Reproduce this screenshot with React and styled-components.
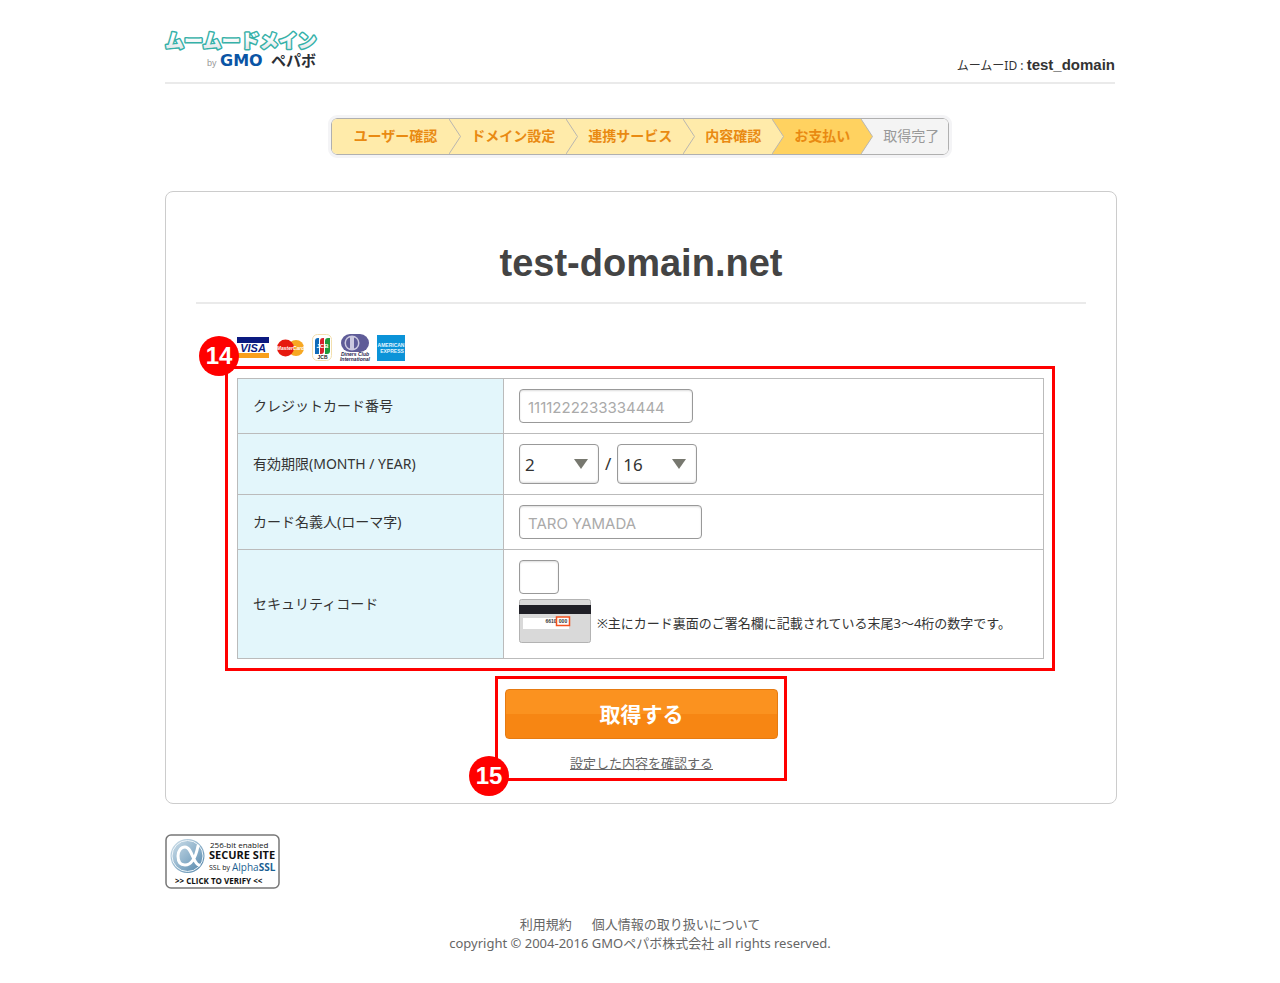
import React from 'react'
import styled, { createGlobalStyle } from 'styled-components'

const steps = [
  { label: 'ユーザー確認', state: 'done' },
  { label: 'ドメイン設定', state: 'done' },
  { label: '連携サービス', state: 'done' },
  { label: '内容確認', state: 'done' },
  { label: 'お支払い', state: 'current' },
  { label: '取得完了', state: 'next' },
]

const stepColors = {
  done: '#ffebaa',
  current: '#ffd260',
  next: '#f4f4f4',
}

function Logo() {
  return (
    <LogoSvg width="154" height="42" viewBox="0 0 154 42" role="img" aria-label="ムームードメイン by GMOペパボ">
      <defs>
        <linearGradient id="bubble" x1="0" y1="0" x2="0" y2="1">
          <stop offset="0.4" stopColor="#fff" />
          <stop offset="1" stopColor="#dcdfe2" />
        </linearGradient>
      </defs>
      <LogoKana x="0" y="20">ムームードメイン</LogoKana>
      <LogoBy x="42" y="38">by</LogoBy>
      <LogoGmo x="55" y="38">GMO</LogoGmo>
      <LogoPepabo x="106" y="38">ペパボ</LogoPepabo>
    </LogoSvg>
  )
}

function StepArrow({ from, to }) {
  return (
    <ArrowBox $state={to}>
      <svg width="12" height="35" viewBox="0 0 12 35" aria-hidden="true">
        <path d="M0 0L11.500 17.500L0 35Z" fill={stepColors[from]} />
        <path d="M0 0L11.500 17.500L0 35" fill="none" stroke="#b9b6b0" />
      </svg>
    </ArrowBox>
  )
}

function CardBrands() {
  return (
    <svg width="170" height="30" viewBox="0 0 170 30" role="img" aria-label="VISA MasterCard JCB Diners Club American Express">
      <rect x="0" y="4" width="32" height="21" fill="#fff" />
      <rect x="0" y="4" width="32" height="6" fill="#0b1a80" />
      <rect x="0" y="20" width="32" height="5" fill="#f9a01b" />
      <CardText x="16" y="19" $size={11} $color="#0b1a80" $italic>VISA</CardText>

      <circle cx="59" cy="15" r="8" fill="#f7a823" />
      <circle cx="48.500" cy="15" r="8.500" fill="#e6190f" />
      <CardText x="53.500" y="17" $size={5} $color="#fff" $italic>MasterCard</CardText>

      <rect x="75.500" y="1.500" width="19" height="26" rx="5" fill="#fff" stroke="#f3dfae" />
      <path d="M78 8q0-3 3-3h1v16h-4z" fill="#0f6bb8" />
      <path d="M83 8q0-3 3-3h1v13q0 3-3 3h-1z" fill="#d9202d" />
      <path d="M88 8q0-3 3-3h2v13q0 3-3 3h-2z" fill="#1f9a3c" />
      <CardText x="85.500" y="15" $size={6} $color="#fff">JCB</CardText>
      <CardText x="85.500" y="26" $size={5} $color="#222">JCB</CardText>

      <rect x="104" y="1" width="28" height="18" rx="9" fill="#5f5c98" />
      <circle cx="115" cy="10" r="7.500" fill="#ccc9df" />
      <path d="M113 4.500a5.800 5.800 0 0 0 0 11zM117 4.500a5.800 5.800 0 0 1 0 11z" fill="#5f5c98" />
      <CardText x="118" y="23" $size={5} $color="#29264f" $italic>Diners Club</CardText>
      <CardText x="118" y="28" $size={5} $color="#29264f" $italic>International</CardText>

      <rect x="140" y="2" width="28" height="26" fill="#0b93d8" />
      <CardText x="154" y="14" $size={5} $color="#e5f5ff">AMERICAN</CardText>
      <CardText x="155" y="20" $size={5} $color="#e5f5ff">EXPRESS</CardText>
    </svg>
  )
}

function CardBack() {
  return (
    <svg width="72" height="44" viewBox="0 0 72 44" aria-hidden="true">
      <rect x="0.500" y="0.500" width="71" height="43" rx="2" fill="#d9d9d9" stroke="#b3b3b3" />
      <rect x="0" y="6" width="72" height="9" fill="#1f1f26" />
      <rect x="4" y="19" width="46" height="11" fill="#fff" />
      <CardText x="32" y="24" $size={5} $color="#333">6610</CardText>
      <rect x="37.500" y="18" width="13" height="8.500" fill="#fff" stroke="#f4511e" strokeWidth="1.500" />
      <CardText x="44" y="24" $size={5} $color="#333">000</CardText>
    </svg>
  )
}

function SecureSeal() {
  return (
    <svg width="115" height="55" viewBox="0 0 115 55" role="img" aria-label="Secure site, SSL by AlphaSSL">
      <defs>
        <linearGradient id="seal" x1="0" y1="0" x2="1" y2="1">
          <stop offset="0" stopColor="#d3e2ec" />
          <stop offset="0.550" stopColor="#8db1ca" />
          <stop offset="1" stopColor="#4c7fa5" />
        </linearGradient>
      </defs>
      <rect x="1" y="1" width="113" height="53" rx="5" fill="#fff" stroke="#777" strokeWidth="1.500" />
      <circle cx="22.500" cy="22" r="17" fill="url(#seal)" />
      <circle cx="22.500" cy="22" r="15.500" fill="none" stroke="#eef5f9" />
      <path d="M33 12C31 22 27 31 20 31C15 31 13 27 13 22C13 17 16 13 20 13C27 13 28 30 34 31" fill="none" stroke="#fff" strokeWidth="3" strokeLinecap="round" />
      <SealText x="45" y="14" $size={8}>256-bit enabled</SealText>
      <SealText x="44" y="25" $size={11} $bold>SECURE SITE</SealText>
      <SealText x="44" y="36" $size={7}>SSL by</SealText>
      <SealText x="67" y="37" $size={10} $color="#1b5f93">Alpha<tspan fontWeight="700">SSL</tspan></SealText>
      <SealText x="10" y="50" $size={8} $bold>&gt;&gt; CLICK TO VERIFY &lt;&lt;</SealText>
    </svg>
  )
}

function DropDown({ label, value }) {
  return (
    <SelectWrap>
      <Select aria-label={label} defaultValue={value}>
        <option value={value}>{value}</option>
      </Select>
      <SelectMark width="14" height="10" viewBox="0 0 14 10" aria-hidden="true">
        <path d="M0 0H14L7 10Z" fill="#77786f" />
      </SelectMark>
    </SelectWrap>
  )
}

function App() {
  return (
    <>
      <GlobalStyle />
      <Page>
        <Header>
          <Logo />
          <UserId>ムームーID : <strong>test_domain</strong></UserId>
        </Header>

        <StepBar>
          {steps.map((step, i) => (
            <React.Fragment key={step.label}>
              {i > 0 && <StepArrow from={steps[i - 1].state} to={step.state} />}
              <Step $state={step.state}>{step.label}</Step>
            </React.Fragment>
          ))}
        </StepBar>

        <Panel>
          <DomainName>test-domain.net</DomainName>
          <Brands>
            <CardBrands />
          </Brands>

          <CardArea>
            <Badge>14</Badge>
            <CardTable>
              <tbody>
                <tr>
                  <Th scope="row"><label htmlFor="number">クレジットカード番号</label></Th>
                  <Td><TextInput id="number" placeholder="1111222233334444" $width={174} /></Td>
                </tr>
                <tr>
                  <Th scope="row">有効期限(MONTH / YEAR)</Th>
                  <Td>
                    <Expiry>
                      <DropDown label="MONTH" value="2" />
                      <span>/</span>
                      <DropDown label="YEAR" value="16" />
                    </Expiry>
                  </Td>
                </tr>
                <tr>
                  <Th scope="row"><label htmlFor="holder">カード名義人(ローマ字)</label></Th>
                  <Td><TextInput id="holder" placeholder="TARO YAMADA" $width={183} /></Td>
                </tr>
                <tr>
                  <Th scope="row"><label htmlFor="code">セキュリティコード</label></Th>
                  <Td>
                    <TextInput id="code" $width={40} />
                    <CodeNote>
                      <CardBack />
                      <p>※主にカード裏面のご署名欄に記載されている末尾3〜4桁の数字です。</p>
                    </CodeNote>
                  </Td>
                </tr>
              </tbody>
            </CardTable>
          </CardArea>

          <SubmitArea>
            <Badge $bottom>15</Badge>
            <SubmitButton type="button">取得する</SubmitButton>
            <ConfirmLink href="#confirm">設定した内容を確認する</ConfirmLink>
          </SubmitArea>
        </Panel>

        <Seal href="#verify">
          <SecureSeal />
        </Seal>

        <Footer>
          <FooterLinks>
            <a href="#terms">利用規約</a>
            <a href="#privacy">個人情報の取り扱いについて</a>
          </FooterLinks>
          <p>copyright © 2004-2016 GMOペパボ株式会社 all rights reserved.</p>
        </Footer>
      </Page>
    </>
  )
}

export default App


const GlobalStyle = createGlobalStyle`
    * {
        box-sizing: border-box;
    }
    body {
        margin: 0;
        background: #fff;
        color: #333;
        font-family: "Noto Sans", "Noto Sans CJK JP", sans-serif;
        font-size: 14px;
        line-height: 20px;
    }
    p, h1 {
        margin: 0;
    }
    svg {
        display: block;
        flex-shrink: 0;
    }
`

const Page = styled.div`
    max-width: 950px;
    margin: 0 auto;
    padding-bottom: 30px;
`

const Header = styled.header`
    display: flex;
    justify-content: space-between;
    align-items: flex-end;
    padding: 28px 0 6px;
    border-bottom: 2px solid #eaeaea;
`

const LogoSvg = styled.svg`
    margin-bottom: 6px;
    overflow: visible;
`

const UserId = styled.p`
    font-size: 12px;

    strong {
        font-family: "Liberation Sans", sans-serif;
        font-size: 15px;
    }
`

const LogoKana = styled.text`
    font-family: "Noto Sans CJK JP", sans-serif;
    font-size: 19px;
    font-weight: 900;
    fill: url(#bubble);
    stroke: #35b0a8;
    stroke-width: 3;
    stroke-linejoin: round;
    paint-order: stroke;
`

const LogoBy = styled.text`
    font-family: "Liberation Sans", sans-serif;
    font-size: 9px;
    fill: #999;
`

const LogoGmo = styled.text`
    font-family: "DejaVu Sans", sans-serif;
    font-size: 16px;
    font-weight: 700;
    fill: #0a55a5;
`

const LogoPepabo = styled.text`
    font-family: "Noto Sans CJK JP", sans-serif;
    font-size: 15px;
    font-weight: 700;
    fill: #2b2f36;
`

const StepBar = styled.div`
    display: flex;
    width: fit-content;
    height: 37px;
    margin: 34px auto 36px;
    border: 1px solid #b0b0b0;
    border-radius: 6px;
    overflow: hidden;
    outline: 3px solid #f4f4f6;
`

const Step = styled.div`
    display: flex;
    align-items: center;
    padding: 0 11px 1px 10px;
    background: ${props => stepColors[props.$state]};
    color: ${props => props.$state === 'next' ? '#999' : '#e98a12'};
    font-weight: ${props => props.$state === 'next' ? 400 : 700};

    &:first-child {
        padding-left: 22px;
        padding-right: 12px;
    }
    &:last-child {
        padding-right: 9px;
    }
`

const ArrowBox = styled.div`
    background: ${props => stepColors[props.$state]};
`

const Panel = styled.main`
    box-sizing: content-box;
    width: 100%;
    border: 1px solid #ccc;
    border-radius: 8px;
    padding-bottom: 22px;
`

const DomainName = styled.h1`
    margin: 0 30px;
    padding: 46px 0 14px;
    border-bottom: 2px solid #eaeaea;
    color: #444;
    font-family: "Liberation Sans", sans-serif;
    font-size: 38px;
    line-height: 50px;
    text-align: center;
`

const Brands = styled.div`
    margin: 29px 71px 3px;
`

const CardArea = styled.section`
    position: relative;
    margin: 0 61px 5px 59px;
    padding: 9px 8px 9px 9px;
    border: 3px solid #f00;
`

const Badge = styled.span`
    position: absolute;
    left: -29px;
    ${props => props.$bottom ? 'bottom: -18px;' : 'top: -33px;'}
    display: flex;
    align-items: center;
    justify-content: center;
    width: 40px;
    height: 40px;
    border-radius: 50%;
    background: #f00;
    color: #fff;
    font-family: "Liberation Sans", sans-serif;
    font-size: 24px;
    font-weight: 700;
`

const CardTable = styled.table`
    width: 100%;
    border-collapse: collapse;
`

const Th = styled.th`
    width: 33%;
    padding: 10px 15px;
    border: 1px solid #bbb;
    background: #e3f6fb;
    font-weight: 400;
    text-align: left;
`

const Td = styled.td`
    padding: 10px 15px;
    border: 1px solid #bbb;
`

const TextInput = styled.input`
    display: block;
    width: ${props => props.$width}px;
    height: 34px;
    padding: 3px 8px 0;
    border: 1px solid #999;
    border-radius: 4px;
    box-shadow: inset 0 1px 2px #ddd;
    font-family: Inter, sans-serif;
    font-size: 15px;

    &::placeholder {
        color: #aaa;
    }
`

const Expiry = styled.div`
    display: flex;
    align-items: center;
    gap: 6px;
    font-size: 17px;
`

const SelectWrap = styled.div`
    position: relative;
`

const Select = styled.select`
    appearance: none;
    display: block;
    width: 80px;
    height: 40px;
    padding: 0 5px;
    border: 1px solid #999;
    border-radius: 4px;
    background: #fff;
    box-shadow: inset 0 -1px 2px #ddd;
    color: #333;
    font-family: "Noto Sans", sans-serif;
    font-size: 17px;
`

const SelectMark = styled.svg`
    position: absolute;
    right: 11px;
    top: 15px;
    pointer-events: none;
`

const CodeNote = styled.div`
    display: flex;
    align-items: center;
    gap: 6px;
    padding: 5px 0;
    font-size: 13px;

    p {
        padding-top: 4px;
    }
`

const SubmitArea = styled.section`
    position: relative;
    display: flex;
    flex-direction: column;
    align-items: center;
    gap: 14px;
    width: 292px;
    margin: 0 auto;
    padding: 10px 6px 5px 7px;
    border: 3px solid #f00;
`

const SubmitButton = styled.button`
    width: 100%;
    height: 50px;
    padding: 0 0 2px;
    border: 1px solid #e67b12;
    border-radius: 4px;
    background: linear-gradient(#fb921f 50%, #f78613 50%);
    color: #fff;
    font-family: "Noto Sans CJK JP", sans-serif;
    font-size: 21px;
    font-weight: 700;
    cursor: pointer;
`

const ConfirmLink = styled.a`
    color: #666;
    font-size: 13px;
`

const Seal = styled.a`
    display: block;
    width: fit-content;
    margin-top: 30px;
`

const CardText = styled.text`
    font-family: "Liberation Sans", sans-serif;
    font-size: ${props => props.$size}px;
    font-weight: 700;
    font-style: ${props => props.$italic ? 'italic' : 'normal'};
    fill: ${props => props.$color};
    text-anchor: middle;
`

const SealText = styled.text`
    font-family: "Open Sans", sans-serif;
    font-size: ${props => props.$size}px;
    font-weight: ${props => props.$bold ? 700 : 400};
    fill: ${props => props.$color || '#111'};
`

const Footer = styled.footer`
    margin-top: 26px;
    color: #666;
    font-size: 13px;
    line-height: 19px;
    text-align: center;
`

const FooterLinks = styled.nav`
    display: flex;
    justify-content: center;
    gap: 20px;

    a {
        color: inherit;
        text-decoration: none;
    }
`
